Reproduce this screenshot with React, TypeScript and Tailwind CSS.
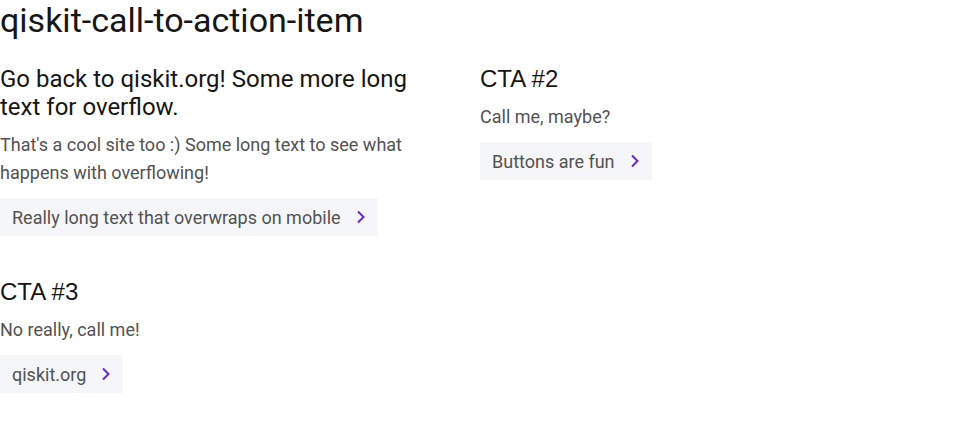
import React from 'react';

interface CtaItemProps {
  title: string;
  description: string;
  label: string;
  titleFont?: string;
}

function Chevron() {
  return (
    <svg viewBox="0 0 10 14" className="w-[10px] h-[14px] text-[#6929c4]" fill="none" aria-hidden="true">
      <path d="M2 1.5 7.5 7 2 12.5" stroke="currentColor" strokeWidth="2" />
    </svg>
  );
}

function CtaItem({ title, description, label, titleFont }: CtaItemProps) {
  return (
    <div className="pr-8">
      <h2 className={`text-[24px] leading-[28px] text-[#161616] ${titleFont ?? ''}`}>{title}</h2>
      <p className="mt-[10px] text-[18px] leading-[28px] text-[#525252]">{description}</p>
      <a
        href="#"
        className="mt-[11px] inline-flex items-center gap-[15px] h-[38px] pl-3 pr-3 bg-[#f5f6f8] text-[18px] text-[#525252]"
      >
        <span>{label}</span>
        <Chevron />
      </a>
    </div>
  );
}

export default function App() {
  return (
    <div className="w-[960px] h-[425px] bg-white font-['Roboto',sans-serif]">
      <h1 className="text-[34px] leading-[40px] text-[#161616]">qiskit-call-to-action-item</h1>
      <div className="mt-[25px] grid grid-cols-2 gap-y-[42px]">
        <CtaItem
          title="Go back to qiskit.org! Some more long text for overflow."
          description="That's a cool site too :) Some long text to see what happens with overflowing!"
          label="Really long text that overwraps on mobile"
        />
        <CtaItem
          title="CTA #2"
          description="Call me, maybe?"
          label="Buttons are fun"
          titleFont="font-['Liberation_Sans',sans-serif]"
        />
        <CtaItem
          title="CTA #3"
          description="No really, call me!"
          label="qiskit.org"
          titleFont="font-['Liberation_Sans',sans-serif]"
        />
      </div>
    </div>
  );
}
